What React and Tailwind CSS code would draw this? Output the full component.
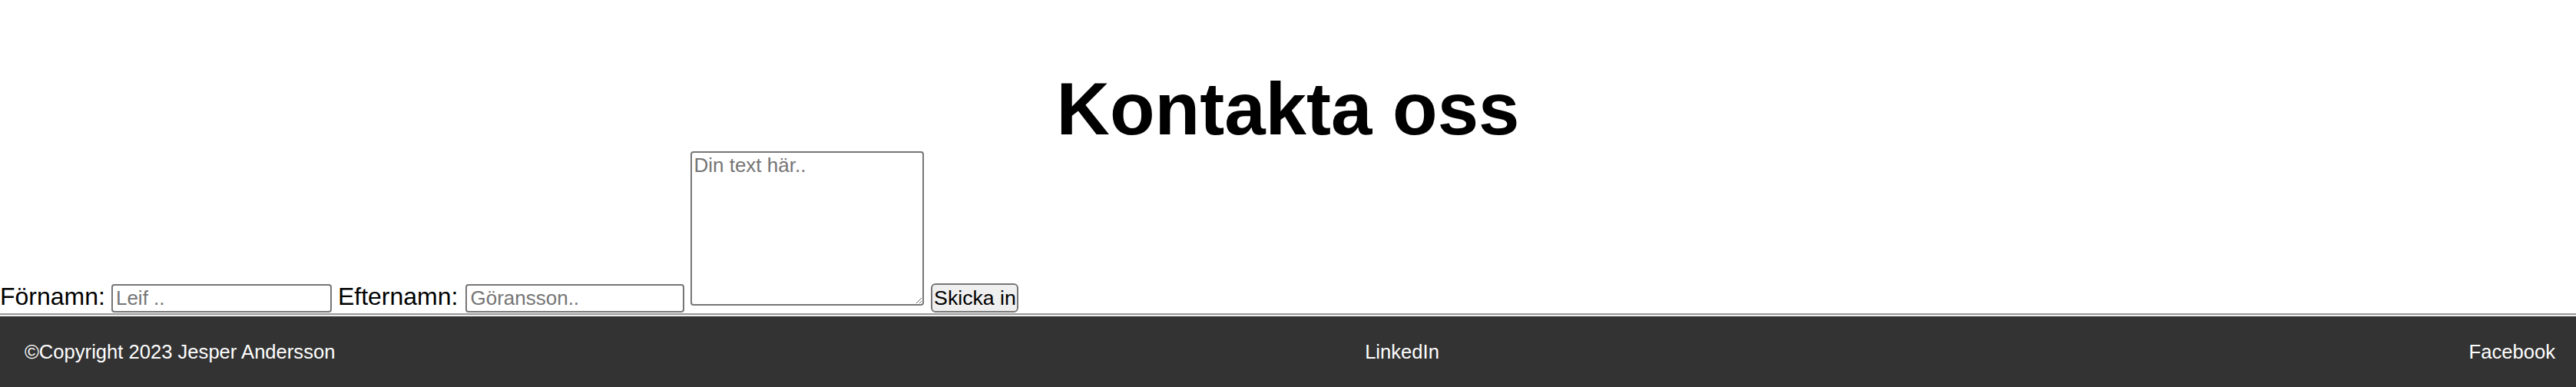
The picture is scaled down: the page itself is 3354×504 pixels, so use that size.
export default function App() {
  return (
    <div className="w-full min-h-[504px] flex flex-col bg-white text-black font-['Liberation_Sans',Arial,sans-serif]">
      <h1 className="mt-[87px] text-center text-[96px] leading-[110px] font-bold">Kontakta oss</h1>
      <form
        className="flex items-end h-[211px]"
        onSubmit={(e) => e.preventDefault()}
      >
        <label htmlFor="fn" className="text-[32px] leading-[37px] mb-[3px] whitespace-nowrap">Förnamn:</label>
        <input
          id="fn"
          type="text"
          placeholder="Leif .."
          className="ml-[8px] mb-[1px] w-[287px] h-[37px] border-2 border-[#767676] rounded-[4px] px-[4px] text-[26px] placeholder:text-[#757575] bg-white"
        />
        <label htmlFor="ln" className="ml-[8px] text-[32px] leading-[37px] mb-[3px] whitespace-nowrap">Efternamn:</label>
        <input
          id="ln"
          type="text"
          placeholder="Göransson.."
          className="ml-[10px] mb-[1px] w-[285px] h-[37px] border-2 border-[#767676] rounded-[4px] px-[4px] text-[26px] placeholder:text-[#757575] bg-white"
        />
        <textarea
          placeholder="Din text här.."
          className="ml-[8px] mb-[10px] w-[304px] h-[201px] border-2 border-[#767676] rounded-[4px] px-[2px] py-[1px] text-[26px] leading-[30px] placeholder:text-[#757575] bg-white resize"
        />
        <button
          type="submit"
          className="ml-[9px] mb-[1px] w-[114px] h-[38px] flex items-center justify-center border-2 border-[#767676] rounded-[6px] bg-[#efefef] text-[26.67px] leading-none whitespace-nowrap"
        >
          Skicka in
        </button>
      </form>
      <div className="h-[4px] border-t-2 border-b-2 border-t-[#9a9a9a] border-b-[#eeeeee]" />
      <footer className="h-[92px] bg-[#333333] text-white text-[25.6px] flex items-center justify-between pl-[32px] pr-[27px]">
        <p>©Copyright 2023 Jesper Andersson</p>
        <a href="#" className="text-white">LinkedIn</a>
        <a href="#" className="text-white">Facebook</a>
      </footer>
    </div>
  );
}
